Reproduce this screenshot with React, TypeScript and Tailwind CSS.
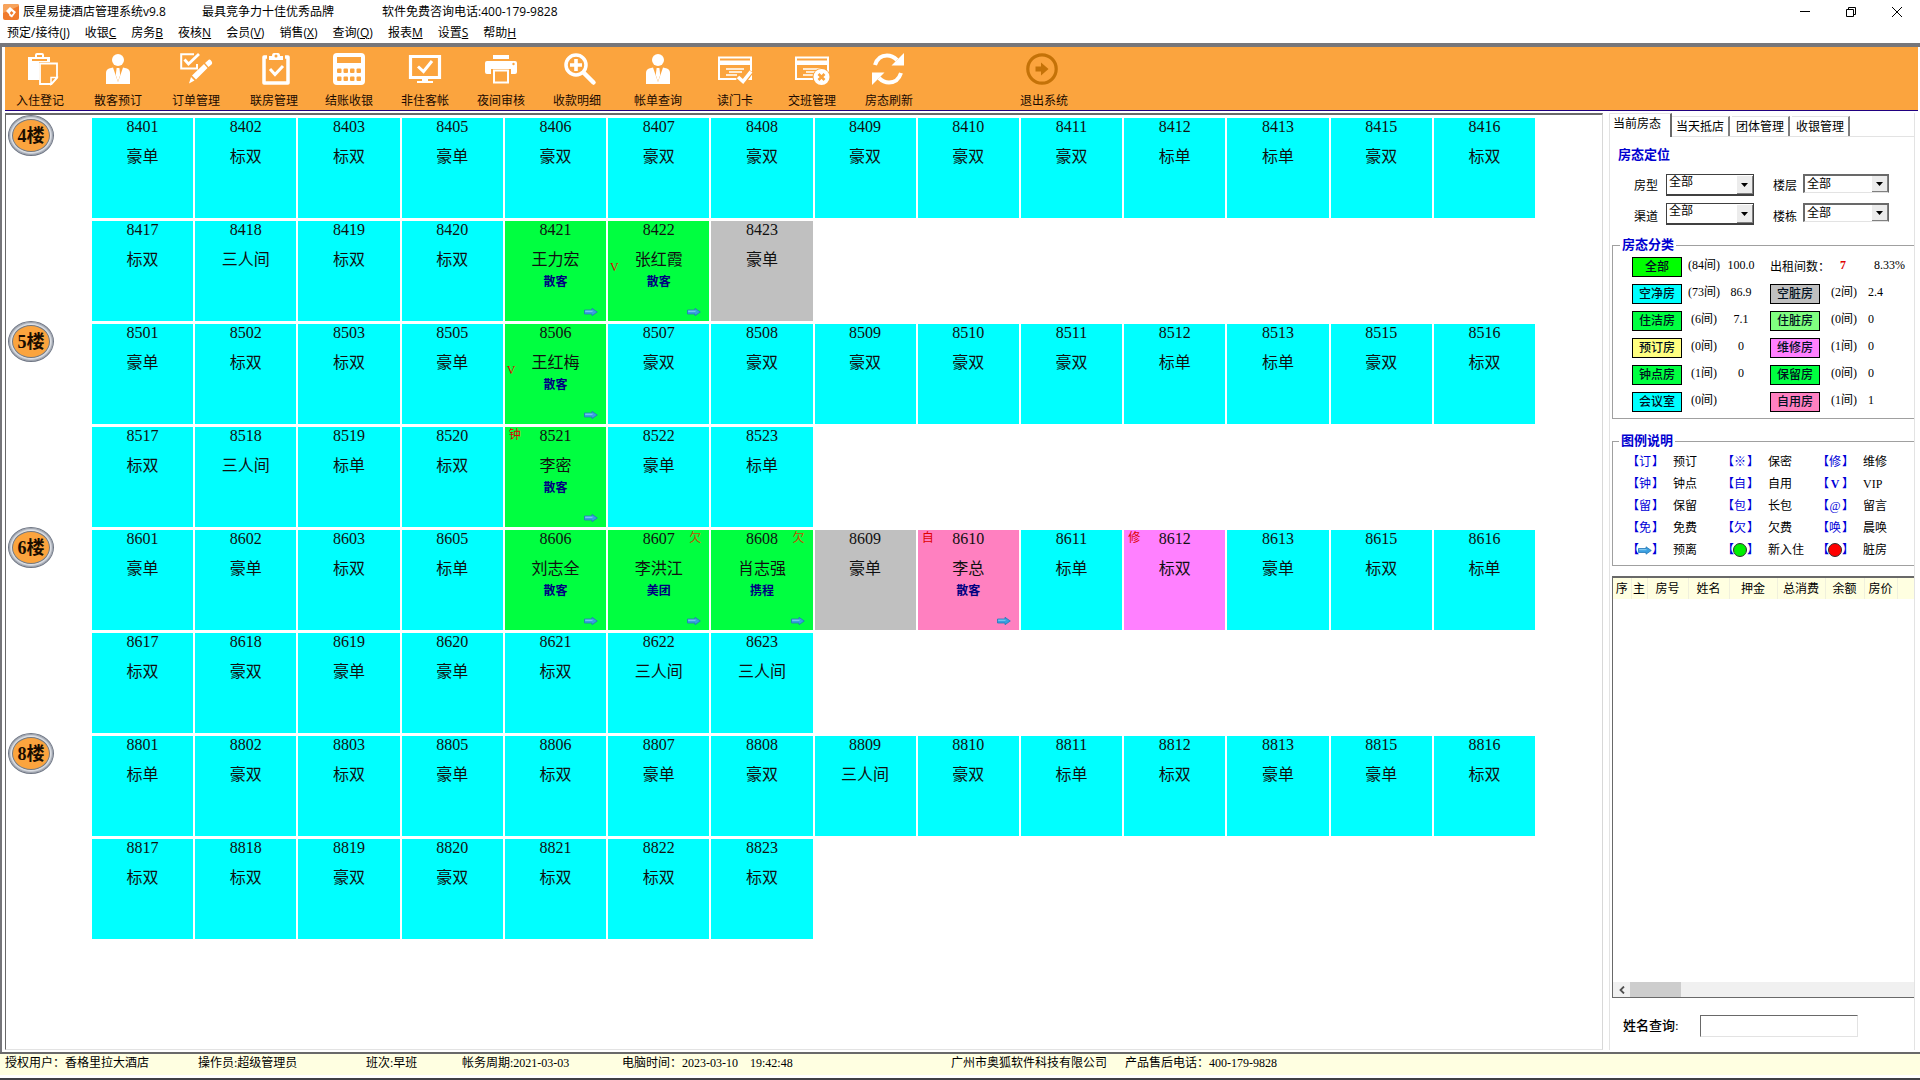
import React from "react";

type Kind = "clean" | "occupied" | "dirty" | "self" | "repair";

interface Room {
  no: string;
  label: string;
  kind?: Kind;
  source?: string;
  tagLeft?: string;
  tagRight?: string;
  vip?: boolean;
}

interface Floor {
  name: string;
  rooms: Room[][];
}

const NUMS_A = ["01", "02", "03", "05", "06", "07", "08", "09", "10", "11", "12", "13", "15", "16"];
const NUMS_B = ["17", "18", "19", "20", "21", "22", "23"];

const row = (floor: string, nums: string[], labels: string, extra: Record<string, Partial<Room>> = {}): Room[] =>
  labels.split(" ").map((label, i) => ({ no: floor + nums[i], label, ...extra[nums[i]] }));

const FLOORS: Floor[] = [
  {
    name: "4楼",
    rooms: [
      row("84", NUMS_A, "豪单 标双 标双 豪单 豪双 豪双 豪双 豪双 豪双 豪双 标单 标单 豪双 标双"),
      row("84", NUMS_B, "标双 三人间 标双 标双 王力宏 张红霞 豪单", {
        "21": { kind: "occupied", source: "散客" },
        "22": { kind: "occupied", source: "散客", vip: true },
        "23": { kind: "dirty" },
      }),
    ],
  },
  {
    name: "5楼",
    rooms: [
      row("85", NUMS_A, "豪单 标双 标双 豪单 王红梅 豪双 豪双 豪双 豪双 豪双 标单 标单 豪双 标双", {
        "06": { kind: "occupied", source: "散客", vip: true },
      }),
      row("85", NUMS_B, "标双 三人间 标单 标双 李密 豪单 标单", {
        "21": { kind: "occupied", source: "散客", tagLeft: "钟" },
      }),
    ],
  },
  {
    name: "6楼",
    rooms: [
      row("86", NUMS_A, "豪单 豪单 标双 标单 刘志全 李洪江 肖志强 豪单 李总 标单 标双 豪单 标双 标单", {
        "06": { kind: "occupied", source: "散客" },
        "07": { kind: "occupied", source: "美团", tagRight: "欠" },
        "08": { kind: "occupied", source: "携程", tagRight: "欠" },
        "09": { kind: "dirty" },
        "10": { kind: "self", source: "散客", tagLeft: "自" },
        "12": { kind: "repair", tagLeft: "修" },
      }),
      row("86", NUMS_B, "标双 豪双 豪单 豪单 标双 三人间 三人间"),
    ],
  },
  {
    name: "8楼",
    rooms: [
      row("88", NUMS_A, "标单 豪双 标双 豪单 标双 豪单 豪双 三人间 豪双 标单 标双 豪单 豪单 标双"),
      row("88", NUMS_B, "标双 标双 豪双 豪双 标双 标双 标双"),
    ],
  },
];

const KIND_BG: Record<Kind, string> = {
  clean: "bg-[#00ffff]",
  occupied: "bg-[#00ff40]",
  dirty: "bg-[#c0c0c0]",
  self: "bg-[#ff80c0]",
  repair: "bg-[#ff80ff]",
};

const ORANGE = "#fba43e";

function ArrowIcon({ className }: { className: string }) {
  return (
    <svg viewBox="0 0 14 10" className={className} aria-hidden="true">
      <path d="M.5 3H8V1.300L13.300 5 8 8.700V7H.5Z" fill="#3a9fe0" stroke="#2478b8" strokeWidth=".8" />
      <path d="M1.200 4.200H8.500" fill="none" stroke="#8fd2f6" strokeWidth="1" />
    </svg>
  );
}

function RoomTile({ room }: { room: Room }) {
  const guest = room.source !== undefined;
  return (
    <button
      type="button"
      className={`relative flex h-[100px] flex-col items-center text-base text-[#101010] ${KIND_BG[room.kind ?? "clean"]}`}
    >
      <span className="mt-px leading-4">{room.no}</span>
      <span className="mt-3 leading-5">{room.label}</span>
      {guest && <span className="mt-1 text-xs leading-4 font-bold text-[#000080]">{room.source}</span>}
      {room.tagLeft && <span className="absolute top-0.5 left-1 text-xs leading-3 text-[#e00000]">{room.tagLeft}</span>}
      {room.tagRight && <span className="absolute top-0.5 right-2 text-xs leading-3 text-[#c05000]">{room.tagRight}</span>}
      {room.vip && <span className="absolute top-[38px] left-0.5 text-xs leading-4 text-[#e00000]">V</span>}
      {guest && <ArrowIcon className="absolute right-2 bottom-1 h-[10px] w-[14px]" />}
    </button>
  );
}

function FloorBadge({ name }: { name: string }) {
  return (
    <button
      type="button"
      className="flex h-[41px] w-[46px] items-center justify-center rounded-[50%] border border-[#6f7684] bg-[#e4e7ec] p-[3px] shadow-[inset_0_0_2px_1px_#8a909c]"
    >
      <span className="flex h-full w-full items-center justify-center rounded-[50%] border border-[#75797f] bg-[#fba43e] text-lg leading-5 font-bold whitespace-nowrap text-[#1a0d00]">
        {name}
      </span>
    </button>
  );
}

/* ---------- toolbar icons, all on a 32 x 32 grid ---------- */

const PersonIcon = (
  <>
    <circle cx="16" cy="7" r="6" fill="#fff" />
    <path d="M4 31V20Q4 16.500 7 15.500L11 14.500 16 29 21 14.500 25 15.500Q28 16.500 28 20V31Z" fill="#fff" />
    <path d="M14.600 15H17.400L18.200 22 16 28.500 13.800 22Z" fill="#fff" />
  </>
);

const CardBase = (
  <>
    <path d="M0 4.500H32V26H0Z" fill="none" stroke="#fff" strokeWidth="2" />
    <path d="M0 7.500H32V12H0Z" fill="#fff" />
    <path d="M7 16H25M10 19H23M7 22H18" stroke="#fff" strokeWidth="1.500" />
  </>
);

const TOOL_ICONS: Record<string, React.ReactNode> = {
  paste: (
    <>
      <path d="M4 4H11V2Q11 0 13 0H18Q20 0 20 2V4H26V27H4Z" fill="#fff" />
      <path d="M13 2H18V4H13Z" fill={ORANGE} />
      <path d="M8 6H23V8H8Z" fill={ORANGE} />
      <path d="M15 9H34V25L28 32H15Z" fill={ORANGE} />
      <path d="M16 10.500H33V25L27.500 31H16Z" fill={ORANGE} stroke="#fff" strokeWidth="1.800" />
      <path d="M27 31V24.500H33Z" fill={ORANGE} stroke="#fff" strokeWidth="1.500" />
    </>
  ),
  person: PersonIcon,
  edit: (
    <>
      <path d="M14 1.200H1.200V15.500H17V11" fill="none" stroke="#fff" strokeWidth="2" />
      <path d="M4.500 6.500L8.500 11 19 1" fill="none" stroke="#fff" strokeWidth="2.800" />
      <path d="M25 10L29 6.500Q30 6 31 7.500L32 9Q32.500 10.500 31.500 11.500L28.500 14ZM24 11L27.500 15 16 26.500 12 22.500ZM11 24L14.500 27.500 9 30.500Z" fill="#fff" />
    </>
  ),
  clipboard: (
    <>
      <path d="M9 4H6V30H30V4H27" fill="none" stroke="#fff" strokeWidth="3.500" strokeLinejoin="round" />
      <path d="M11 7V3H14Q14 0 16 0H20Q22 0 22 3H25V7Z" fill="#fff" />
      <circle cx="18" cy="3" r="1.500" fill={ORANGE} />
      <path d="M12 16L17 21.500 25 13" fill="none" stroke="#fff" strokeWidth="3" />
    </>
  ),
  calculator: (
    <>
      <rect x="0" y="0" width="32" height="32" rx="4" fill="#fff" />
      <path d="M4 4H28V10H4Z" fill={ORANGE} />
      {[4, 10.5, 17, 23.5].map((x) => (
        <g key={x} fill={ORANGE}>
          <rect x={x} y="15.500" width="4.500" height="4.500" rx="1" />
          <rect x={x} y="23.500" width="4.500" height="4.500" rx="1" />
        </g>
      ))}
    </>
  ),
  monitor: (
    <>
      <path d="M1.500 3.500H30.500V24.500H1.500Z" fill="none" stroke="#fff" strokeWidth="3.200" />
      <path d="M9 13.500L14.500 18.500 23 8" fill="none" stroke="#fff" strokeWidth="3" />
      <path d="M13 26H19V28H24V30H8V28H13Z" fill="#fff" />
    </>
  ),
  printer: (
    <>
      <path d="M8 2H24V6H8Z" fill="#fff" />
      <path d="M2 8H30Q32 8 32 10V19Q32 21 30 21H26V16H6V21H2Q0 21 0 19V10Q0 8 2 8Z" fill="#fff" />
      <path d="M9 17.500H23V29.500H9Z" fill={ORANGE} stroke="#fff" strokeWidth="2" />
      <circle cx="28.500" cy="11" r="1.200" fill={ORANGE} />
    </>
  ),
  search: (
    <>
      <circle cx="15" cy="12" r="10" fill="none" stroke="#fff" strokeWidth="3.500" />
      <path d="M15 6V18M9 12H21" stroke="#fff" strokeWidth="3.600" />
      <path d="M23 20L32.500 29.500" stroke="#fff" strokeWidth="4.500" strokeLinecap="round" />
    </>
  ),
  cardCheck: (
    <>
      {CardBase}
      <path d="M19 24L24 29 32 18" fill="none" stroke={ORANGE} strokeWidth="6" />
      <path d="M19 24L24 28.500 32 18.500" fill="none" stroke="#fff" strokeWidth="3.600" />
    </>
  ),
  cardCross: (
    <>
      {CardBase}
      <circle cx="25.500" cy="24" r="9" fill={ORANGE} />
      <circle cx="25.500" cy="24" r="8" fill="#fff" />
      <path d="M22.500 21L28.500 27M28.500 21L22.500 27" stroke={ORANGE} strokeWidth="2.600" />
    </>
  ),
  refresh: (
    <>
      <path d="M2 12Q5 2.500 14 2.500 19.500 2.500 24 7" fill="none" stroke="#fff" strokeWidth="4" />
      <path d="M31 0V12.500H18.500Z" fill="#fff" />
      <path d="M28 20Q25 29.500 16 29.500 10.500 29.500 6 25" fill="none" stroke="#fff" strokeWidth="4" />
      <path d="M-1 32V19.500H11.500Z" fill="#fff" />
    </>
  ),
  exit: (
    <>
      <circle cx="14" cy="16" r="14.200" fill="none" stroke="#c47208" strokeWidth="3.200" />
      <path d="M7.500 13.500H13V9.500L20.500 16 13 22.500V18.500H7.500Z" fill="#c47208" />
    </>
  ),
};

function ToolButton({ icon, label }: { icon: string; label: string }) {
  return (
    <button type="button" className="flex w-[70px] flex-col items-center">
      <svg viewBox="0 0 32 32" className="h-8 w-8 overflow-visible" aria-hidden="true">
        {TOOL_ICONS[icon]}
      </svg>
      <span className="mt-2 text-xs leading-4 whitespace-nowrap text-[#1a0a00]">{label}</span>
    </button>
  );
}

const MENU: [string, string, string][] = [
  ["预定/接待(", "J", ")"],
  ["收银", "C", ""],
  ["房务", "B", ""],
  ["夜核", "N", ""],
  ["会员(", "V", ")"],
  ["销售(", "X", ")"],
  ["查询(", "Q", ")"],
  ["报表", "M", ""],
  ["设置", "S", ""],
  ["帮助", "H", ""],
];

function TitleBar() {
  return (
    <header className="font-['Open_Sans','Noto_Sans_CJK_SC',sans-serif] text-xs">
      <div className="flex h-6 items-center pl-[3px]">
        <svg viewBox="0 0 16 16" className="h-4 w-4" aria-hidden="true">
          <rect x="0" y="0" width="16" height="16" rx="2" fill="#f07a2c" />
          <path d="M0 2Q0 0 2 0H14Q16 0 16 2L0 9Z" fill="#f7a35c" />
          <path d="M7 3L13 8 9 13.500 6.500 12 6 10 3 7Z" fill="#fff" />
          <path d="M8.500 7L10.500 9 8.500 11 6.800 9Z" fill="#f07a2c" />
        </svg>
        <h1 className="ml-1 w-[179px]">辰星易捷酒店管理系统v9.8</h1>
        <span className="w-[180px]">最具竞争力十佳优秀品牌</span>
        <span>软件免费咨询电话:400-179-9828</span>
        <div className="ml-auto flex">
          <button type="button" aria-label="最小化" className="flex h-5 w-[46px] items-center justify-center">
            <svg viewBox="0 0 10 10" className="h-[10px] w-[10px]"><path d="M0 4.500H10" stroke="#000" /></svg>
          </button>
          <button type="button" aria-label="还原" className="flex h-5 w-[46px] items-center justify-center">
            <svg viewBox="0 0 10 10" className="h-[10px] w-[10px]">
              <path d="M.5 2.500H7.500V9.500H.5ZM2.500 2.500V.5H9.500V7.500H7.500" fill="none" stroke="#000" />
            </svg>
          </button>
          <button type="button" aria-label="关闭" className="flex h-5 w-[46px] items-center justify-center">
            <svg viewBox="0 0 10 10" className="h-[10px] w-[10px]"><path d="M0 0L10 10M10 0L0 10" stroke="#000" /></svg>
          </button>
        </div>
      </div>
      <nav className="flex h-[19px] items-center gap-[15px] pb-0.5 pl-[7px]">
        {MENU.map(([pre, key, post]) => (
          <button type="button" key={pre} className="leading-4">
            {pre}
            <u>{key}</u>
            {post}
          </button>
        ))}
      </nav>
    </header>
  );
}

function Toolbar() {
  return (
    <div className="flex h-16 items-start border-b border-[#200080] bg-[#fba43e] pt-1.5">
      <div className="flex gap-2">
        <ToolButton icon="paste" label="入住登记" />
        <ToolButton icon="person" label="散客预订" />
        <ToolButton icon="edit" label="订单管理" />
        <ToolButton icon="clipboard" label="联房管理" />
      </div>
      <div className="ml-[5px] flex gap-1.5">
        <ToolButton icon="calculator" label="结账收银" />
        <ToolButton icon="monitor" label="非住客帐" />
        <ToolButton icon="printer" label="夜间审核" />
        <ToolButton icon="search" label="收款明细" />
      </div>
      <div className="ml-[11px] flex gap-[7px]">
        <ToolButton icon="person" label="帐单查询" />
        <ToolButton icon="cardCheck" label="读门卡" />
        <ToolButton icon="cardCross" label="交班管理" />
        <ToolButton icon="refresh" label="房态刷新" />
      </div>
      <div className="ml-[85px]">
        <ToolButton icon="exit" label="退出系统" />
      </div>
    </div>
  );
}

function RoomBoard() {
  return (
    <main className="flex-1 border-t-2 border-r border-b border-l border-t-[#696969] border-r-[#d8d8d8] border-b-[#e3e3e3] border-l-[#696969] bg-white pr-[67px]">
      {FLOORS.map((floor) => (
        <section key={floor.name} className="flex">
          <div className="w-[86px] shrink-0 pl-0.5">
            <FloorBadge name={floor.name} />
          </div>
          <div className="flex flex-1 flex-col gap-[3px] pt-[3px]">
            {floor.rooms.map((rooms) => (
              <div key={rooms[0].no} className="grid grid-cols-14 gap-x-0.5">
                {rooms.map((room) => (
                  <RoomTile key={room.no} room={room} />
                ))}
              </div>
            ))}
          </div>
        </section>
      ))}
    </main>
  );
}

function FilterSelect({ id, flat }: { id: string; flat?: boolean }) {
  const box = flat
    ? "h-[19px] w-[86px] border-t-2 border-l-2 border-[#696969] border-b border-r border-b-[#e3e3e3] border-r-[#696969] leading-4"
    : "h-[22px] w-[88px] border-t border-l border-r border-b-2 border-[#404040] pb-1 leading-[15px]";
  return (
    <div className="relative flex">
      <select id={id} defaultValue="all" className={`appearance-none bg-white pl-0.5 text-xs ${box}`}>
        <option value="all">全部</option>
      </select>
      <span
        className={`pointer-events-none absolute top-0.5 right-px flex w-4 items-center justify-center border-r border-b border-[#808080] bg-[#ececec] ${flat ? "h-4" : "h-[18px]"}`}
      >
        <svg viewBox="0 0 7 4" className="h-1 w-[7px]" aria-hidden="true"><path d="M0 0H7L3.500 4Z" fill="#000" /></svg>
      </span>
    </div>
  );
}

function Filters() {
  return (
    <div className="px-2 pt-[10px]">
      <h2 className="text-[13px] leading-4 font-bold text-[#0000d0]">房态定位</h2>
      <div className="mt-[11px] grid grid-cols-[32px_88px_49px_86px] gap-y-[7px] pl-4 text-xs">
        <label htmlFor="f-type" className="pt-1 leading-4">房型</label>
        <FilterSelect id="f-type" />
        <label htmlFor="f-floor" className="pt-1 pl-[19px] leading-4">楼层</label>
        <FilterSelect id="f-floor" flat />
        <label htmlFor="f-channel" className="pt-1.5 leading-4">渠道</label>
        <FilterSelect id="f-channel" />
        <label htmlFor="f-block" className="pt-1.5 pl-[19px] leading-4">楼栋</label>
        <FilterSelect id="f-block" flat />
      </div>
    </div>
  );
}

interface Stat {
  name: string;
  bg: string;
  count: string;
  value: string;
}

const STATS: [Stat, Stat | null][] = [
  [{ name: "全部", bg: "bg-[#00ff00]", count: "(84间)", value: "100.0" }, null],
  [
    { name: "空净房", bg: "bg-[#00ffff]", count: "(73间)", value: "86.9" },
    { name: "空脏房", bg: "bg-[#c0c0c0]", count: "(2间)", value: "2.4" },
  ],
  [
    { name: "住洁房", bg: "bg-[#00ff40]", count: "(6间)", value: "7.1" },
    { name: "住脏房", bg: "bg-[#80ff80]", count: "(0间)", value: "0" },
  ],
  [
    { name: "预订房", bg: "bg-[#ffff80]", count: "(0间)", value: "0" },
    { name: "维修房", bg: "bg-[#ff80ff]", count: "(1间)", value: "0" },
  ],
  [
    { name: "钟点房", bg: "bg-[#00ff40]", count: "(1间)", value: "0" },
    { name: "保留房", bg: "bg-[#00ff40]", count: "(0间)", value: "0" },
  ],
  [
    { name: "会议室", bg: "bg-[#00ffff]", count: "(0间)", value: "" },
    { name: "自用房", bg: "bg-[#ff80c0]", count: "(1间)", value: "1" },
  ],
];

function StatButton({ stat }: { stat: Stat }) {
  return (
    <button type="button" className={`h-5 border border-black text-xs leading-4 font-medium text-[#001020] ${stat.bg}`}>
      {stat.name}
    </button>
  );
}

function StatusStats() {
  return (
    <fieldset className="ml-0.5 border-y border-l border-[#a0a0a0] pb-1.5 pl-[19px] text-xs">
      <legend className="-ml-3 px-0.5 text-[13px] leading-4 font-bold text-[#0000d0]">房态分类</legend>
      <div className="flex flex-col gap-[7px] pt-1">
        {STATS.map(([a, b]) => (
          <div key={a.name} className="grid grid-cols-[50px_44px_30px_14px_50px_48px_1fr] whitespace-nowrap">
            <StatButton stat={a} />
            <span className="text-center leading-4">{a.count}</span>
            <span className="text-center leading-4">{a.value}</span>
            <span />
            {b ? (
              <>
                <StatButton stat={b} />
                <span className="text-center leading-4">{b.count}</span>
                <span className="leading-4">{b.value}</span>
              </>
            ) : (
              <div className="col-span-3 flex leading-4">
                <span className="w-[70px] pt-0.5">出租间数：</span>
                <b className="w-[34px] text-[#e00000]">7</b>
                <span>8.33%</span>
              </div>
            )}
          </div>
        ))}
      </div>
    </fieldset>
  );
}

const dot = (fill: string) => (
  <svg viewBox="0 0 14 14" className="h-[14px] w-[14px]" aria-hidden="true">
    <circle cx="7" cy="7" r="6.500" fill={fill} stroke="#303030" />
  </svg>
);

const LEGEND: [React.ReactNode, string][] = [
  ["订", "预订"], ["※", "保密"], ["修", "维修"],
  ["钟", "钟点"], ["自", "自用"], [<b key="v">V</b>, "VIP"],
  ["留", "保留"], ["包", "长包"], ["@", "留言"],
  ["免", "免费"], ["欠", "欠费"], ["唤", "晨唤"],
  [<ArrowIcon key="a" className="h-[11px] w-[14px]" />, "预离"],
  [dot("#00f000"), "新入住"],
  [dot("#ff0000"), "脏房"],
];

function Legend() {
  return (
    <fieldset className="mt-[14px] ml-0.5 border-y border-l border-[#a0a0a0] pb-[7px] pl-[14px] text-xs">
      <legend className="-ml-2 px-0.5 text-[13px] leading-4 font-bold text-[#0000d0]">图例说明</legend>
      <ul className="grid grid-cols-[95px_95px_1fr] gap-y-1.5 pt-[5px]">
        {LEGEND.map(([mark, text]) => (
          <li key={text} className="flex h-4 items-center leading-4 whitespace-nowrap">
            <span className="flex w-9 items-center text-[#0000d8]">
              <span className="w-[11px]">【</span>
              <span className="flex w-[14px] justify-center">{mark}</span>
              <span className="w-[11px]">】</span>
            </span>
            <span className="pl-[10px]">{text}</span>
          </li>
        ))}
      </ul>
    </fieldset>
  );
}

function GuestTable() {
  return (
    <div className="mt-[10px] ml-0.5 flex flex-1 flex-col border-t-2 border-b border-l border-[#696969]">
      <table className="w-full table-fixed text-xs">
        <thead>
          <tr className="h-[21px] bg-[#ffffe1]">
            <th className="w-[18px] border-r border-[#f0f0dc] font-normal">序</th>
            <th className="w-4 border-r border-[#f0f0dc] font-normal">主</th>
            <th className="w-[41px] border-r border-[#f0f0dc] font-normal">房号</th>
            <th className="w-[41px] border-r border-[#f0f0dc] font-normal">姓名</th>
            <th className="w-12 border-r border-[#f0f0dc] font-normal">押金</th>
            <th className="w-12 border-r border-[#f0f0dc] font-normal">总消费</th>
            <th className="w-[39px] border-r border-[#f0f0dc] font-normal">余额</th>
            <th className="w-[33px] border-r border-[#f0f0dc] font-normal">房价</th>
            <th aria-label="更多" />
          </tr>
        </thead>
        <tbody />
      </table>
      <div className="mt-auto flex h-[15px] items-center bg-[#f0f0f0]">
        <button type="button" aria-label="向左滚动" className="flex w-[17px] justify-center">
          <svg viewBox="0 0 6 8" className="h-2 w-1.5"><path d="M5 .5L1.500 4 5 7.500" fill="none" stroke="#505050" strokeWidth="1.800" /></svg>
        </button>
        <span className="h-[15px] w-[51px] bg-[#cdcdcd]" />
      </div>
    </div>
  );
}

function SidePanel() {
  return (
    <aside className="flex w-[306px] shrink-0 flex-col border-r border-l border-[#e3e3e3] bg-white">
      <div role="tablist" className="flex items-end text-xs leading-4">
        <button type="button" role="tab" aria-selected="true" className="h-6 w-[62px] border-t border-r-2 border-t-[#e3e3e3] border-r-[#696969] pr-1.5 pb-1 whitespace-nowrap">
          当前房态
        </button>
        <div className="flex flex-1 gap-0.5 border-b border-[#e3e3e3]">
          {["当天抵店", "团体管理", "收银管理"].map((t) => (
            <button type="button" role="tab" aria-selected="false" key={t} className="h-5 w-[58px] border-t border-r-2 border-t-[#e3e3e3] border-r-[#808080] whitespace-nowrap">
              {t}
            </button>
          ))}
        </div>
      </div>
      <Filters />
      <div className="h-3" />
      <StatusStats />
      <Legend />
      <GuestTable />
      <div className="flex h-[52px] items-center pt-1 pl-[13px]">
        <label htmlFor="name-query" className="w-[77px] text-[13px] leading-5 font-medium">姓名查询:</label>
        <input id="name-query" type="text" className="h-[22px] w-[158px] border border-[#e3e3e3] border-t-[#696969] border-l-[#696969] bg-white px-1 text-xs outline-none" />
      </div>
    </aside>
  );
}

function StatusBar() {
  return (
    <footer className="border-b-2 border-[#404045] bg-white pb-[3px]">
      <div className="grid h-[23px] grid-cols-[193px_168px_96px_160px_329px_174px_1fr] border-t-2 border-[#696969] bg-[#ffffe1] pl-[5px] text-xs leading-[18px] whitespace-pre">
        <span>授权用户：香格里拉大酒店</span>
        <span>操作员:超级管理员</span>
        <span>班次:早班</span>
        <span>帐务周期:2021-03-03</span>
        <span>{"电脑时间：2023-03-10    19:42:48"}</span>
        <span>广州市奥狐软件科技有限公司</span>
        <span>产品售后电话：400-179-9828</span>
      </div>
    </footer>
  );
}

export default function App() {
  return (
    <div className="flex min-h-screen flex-col bg-white font-['Liberation_Serif','Noto_Sans_CJK_SC',serif] text-black">
      <TitleBar />
      <div className="flex flex-1 flex-col border-t-4 border-l-2 border-[#76767a] pr-0.5 pl-[3px]">
        <Toolbar />
        <div className="flex flex-1 gap-1.5 pt-0.5 pr-[3px] pb-0.5">
          <RoomBoard />
          <SidePanel />
        </div>
      </div>
      <StatusBar />
    </div>
  );
}
